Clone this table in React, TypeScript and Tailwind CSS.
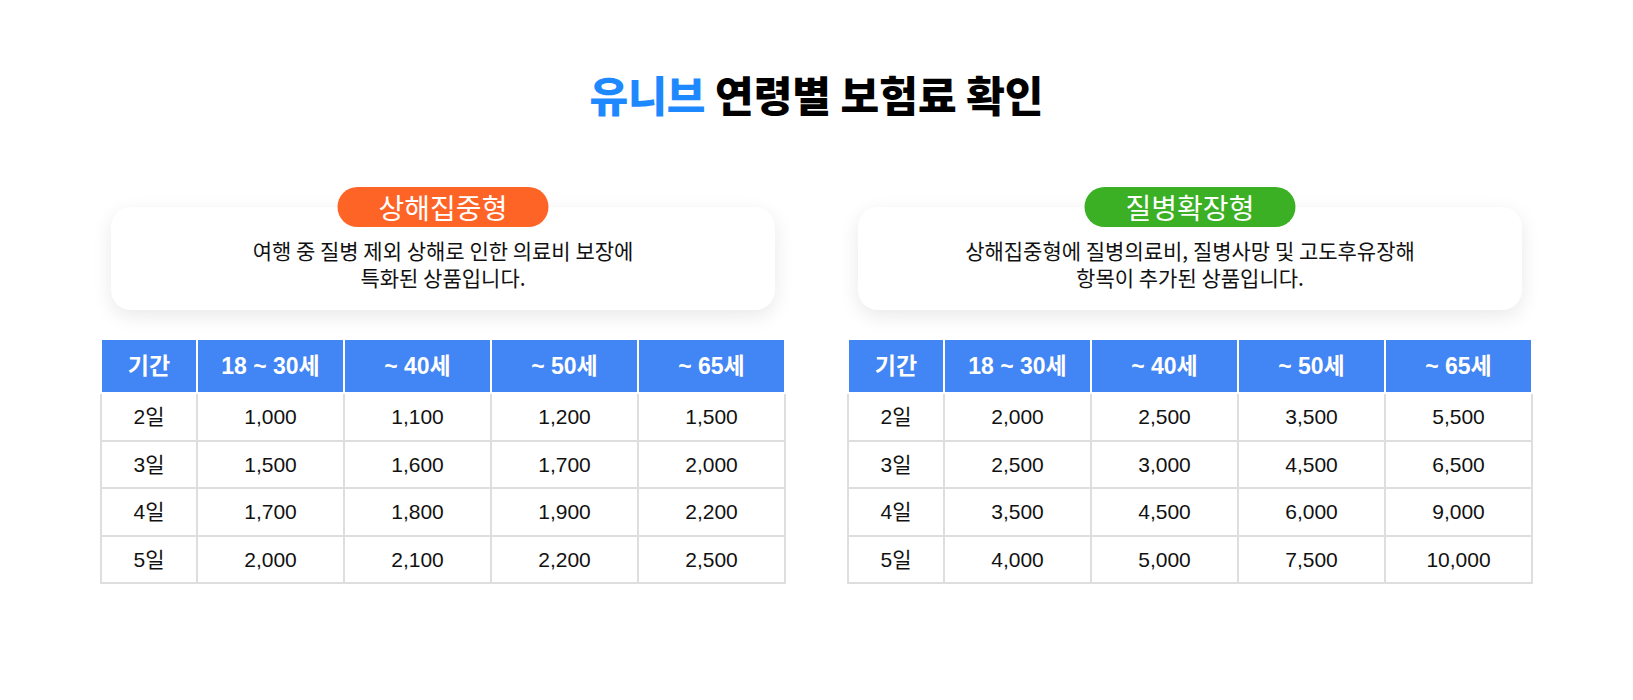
import React from 'react'

interface PlanProps {
  badge: string
  badgeColor: string
  lines: string[]
  rows: string[][]
}

const headers = ['기간', '18 ~ 30세', '~ 40세', '~ 50세', '~ 65세']

const PlanColumn: React.FC<PlanProps> = ({ badge, badgeColor, lines, rows }) => {
  return (
    <div className="w-[686px] flex flex-col">
      {/* 설명 카드 */}
      <div className="relative mx-auto w-[664px] h-[103px] rounded-[20px] bg-white shadow-[0_6px_20px_rgba(0,0,0,0.09)] pt-[30px]">
        <div
          className={`absolute left-1/2 top-0 -translate-x-1/2 -translate-y-1/2 w-[211px] h-[40px] rounded-full flex items-center justify-center text-white text-[28px] leading-[40px] font-normal ${badgeColor}`}
        >
          {badge}
        </div>
        <div className="text-center text-[21px] leading-[27px] text-[#111]">
          {lines.map((l) => (
            <p key={l}>{l}</p>
          ))}
        </div>
      </div>

      {/* 보험료 표 */}
      <table className="mt-[28px] w-full table-fixed border-collapse font-['Liberation_Sans','Noto_Sans_CJK_KR',sans-serif]">
        <thead>
          <tr>
            {headers.map((h, i) => (
              <th
                key={h}
                className={`h-[54px] bg-[#4285f4] text-white text-[23px] font-bold border-2 border-white ${
                  i === 0 ? 'w-[96px]' : ''
                }`}
              >
                {h}
              </th>
            ))}
          </tr>
        </thead>
        <tbody>
          {rows.map((r) => (
            <tr key={r[0]}>
              {r.map((c, i) => (
                <td
                  key={i}
                  className="h-[47.5px] text-center text-[21px] text-[#111] border-2 border-[#dedede]"
                >
                  {c}
                </td>
              ))}
            </tr>
          ))}
        </tbody>
      </table>
    </div>
  )
}

export default function App() {
  return (
    <div className="w-full min-h-[700px] bg-white font-['Noto_Sans_CJK_KR',sans-serif]">
      <h1 className="pt-[69px] text-center text-[42px] leading-[50px] font-black text-black">
        <span className="text-[#1e88ff]">유니브</span> 연령별 보험료 확인
      </h1>

      <div className="mt-[88px] flex justify-center gap-[61px]">
        <PlanColumn
          badge="상해집중형"
          badgeColor="bg-[#ff6427]"
          lines={['여행 중 질병 제외 상해로 인한 의료비 보장에', '특화된 상품입니다.']}
          rows={[
            ['2일', '1,000', '1,100', '1,200', '1,500'],
            ['3일', '1,500', '1,600', '1,700', '2,000'],
            ['4일', '1,700', '1,800', '1,900', '2,200'],
            ['5일', '2,000', '2,100', '2,200', '2,500'],
          ]}
        />
        <PlanColumn
          badge="질병확장형"
          badgeColor="bg-[#3bb024]"
          lines={['상해집중형에 질병의료비, 질병사망 및 고도후유장해', '항목이 추가된 상품입니다.']}
          rows={[
            ['2일', '2,000', '2,500', '3,500', '5,500'],
            ['3일', '2,500', '3,000', '4,500', '6,500'],
            ['4일', '3,500', '4,500', '6,000', '9,000'],
            ['5일', '4,000', '5,000', '7,500', '10,000'],
          ]}
        />
      </div>
    </div>
  )
}
